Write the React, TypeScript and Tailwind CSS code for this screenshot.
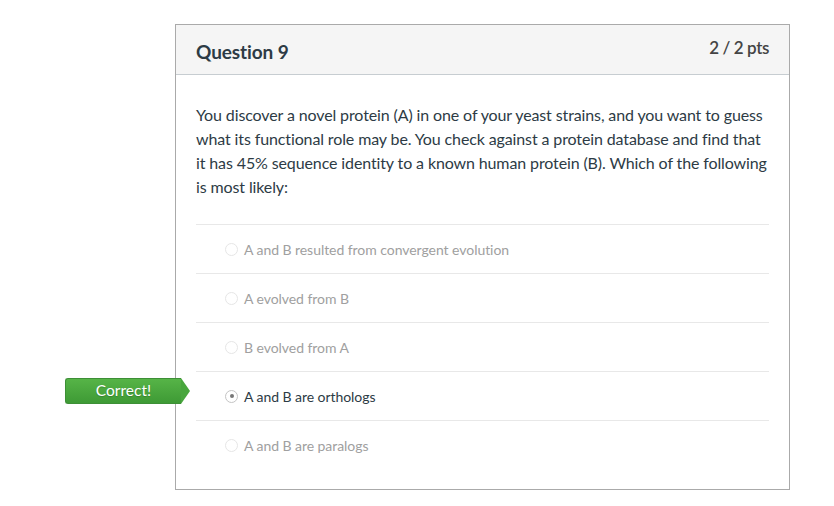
import React from "react";

const answers = [
  { text: "A and B resulted from convergent evolution", selected: false },
  { text: "A evolved from B", selected: false },
  { text: "B evolved from A", selected: false },
  { text: "A and B are orthologs", selected: true, correct: true },
  { text: "A and B are paralogs", selected: false },
];

function Radio({ checked }: { checked?: boolean }) {
  return (
    <span
      className={
        "flex h-[13px] w-[13px] shrink-0 items-center justify-center rounded-full border " +
        (checked ? "border-[#c4c4c4] bg-white" : "border-[#e6e6e6] bg-white")
      }
    >
      {checked && <span className="h-[4px] w-[4px] rounded-full bg-[#777]" />}
    </span>
  );
}

function CorrectBadge() {
  return (
    <div className="absolute left-[-131px] top-[calc(50%-18px)] flex h-[26px] items-center">
      <div className="flex h-[26px] w-[116px] items-center justify-center rounded-l-[3px] border border-r-0 border-[#3d8f36] bg-gradient-to-b from-[#56b447] to-[#3e9a35] text-[15.5px] text-white [text-shadow:0_1px_1px_rgba(0,0,0,0.2)]">
        Correct!
      </div>
      <div className="h-0 w-0 border-y-[13px] border-l-[9px] border-y-transparent border-l-[#48a63d]" />
    </div>
  );
}

export default function App() {
  return (
    <div className="h-[506px] w-[834px] bg-white font-['Lato',sans-serif] text-[#2d3b45]">
      <div className="ml-[175px] pt-[24px]">
        <div className="w-[615px] border border-[#aaaaaa] bg-white">
          <div className="flex h-[50px] items-start justify-between border-b border-[#c7cdd1] bg-[#f5f5f5] px-[20px]">
            <h2 className="pt-[15px] text-[19px] font-bold leading-[24px] tracking-[-0.1px] text-[#2d3b45]">
              Question 9
            </h2>
            <span className="pt-[12px] text-[17px] font-semibold leading-[22px] tracking-[-0.4px] text-[#444]">
              2 / 2 pts
            </span>
          </div>
          <div className="px-[20px] pb-[20px] pt-[28px]">
            <p className="text-[16px] leading-[24px] tracking-[-0.12px]">
              You discover a novel protein (A) in one of your yeast strains, and you
              want to guess what its functional role may be. You check against a
              protein database and find that it has 45% sequence identity to a known
              human protein (B). Which of the following is most likely:
            </p>
            <div className="mt-[25px]">
              {answers.map((a) => (
                <div
                  key={a.text}
                  className="relative flex h-[49px] items-center gap-[6px] border-t border-[#e8e8e8] pl-[29px]"
                >
                  {a.correct && <CorrectBadge />}
                  <Radio checked={a.selected} />
                  <span
                    className={
                      "text-[14px] tracking-[-0.05px] " +
                      (a.selected ? "text-[#2d3b45]" : "text-[#a0a0a0]")
                    }
                  >
                    {a.text}
                  </span>
                </div>
              ))}
            </div>
          </div>
        </div>
      </div>
    </div>
  );
}
